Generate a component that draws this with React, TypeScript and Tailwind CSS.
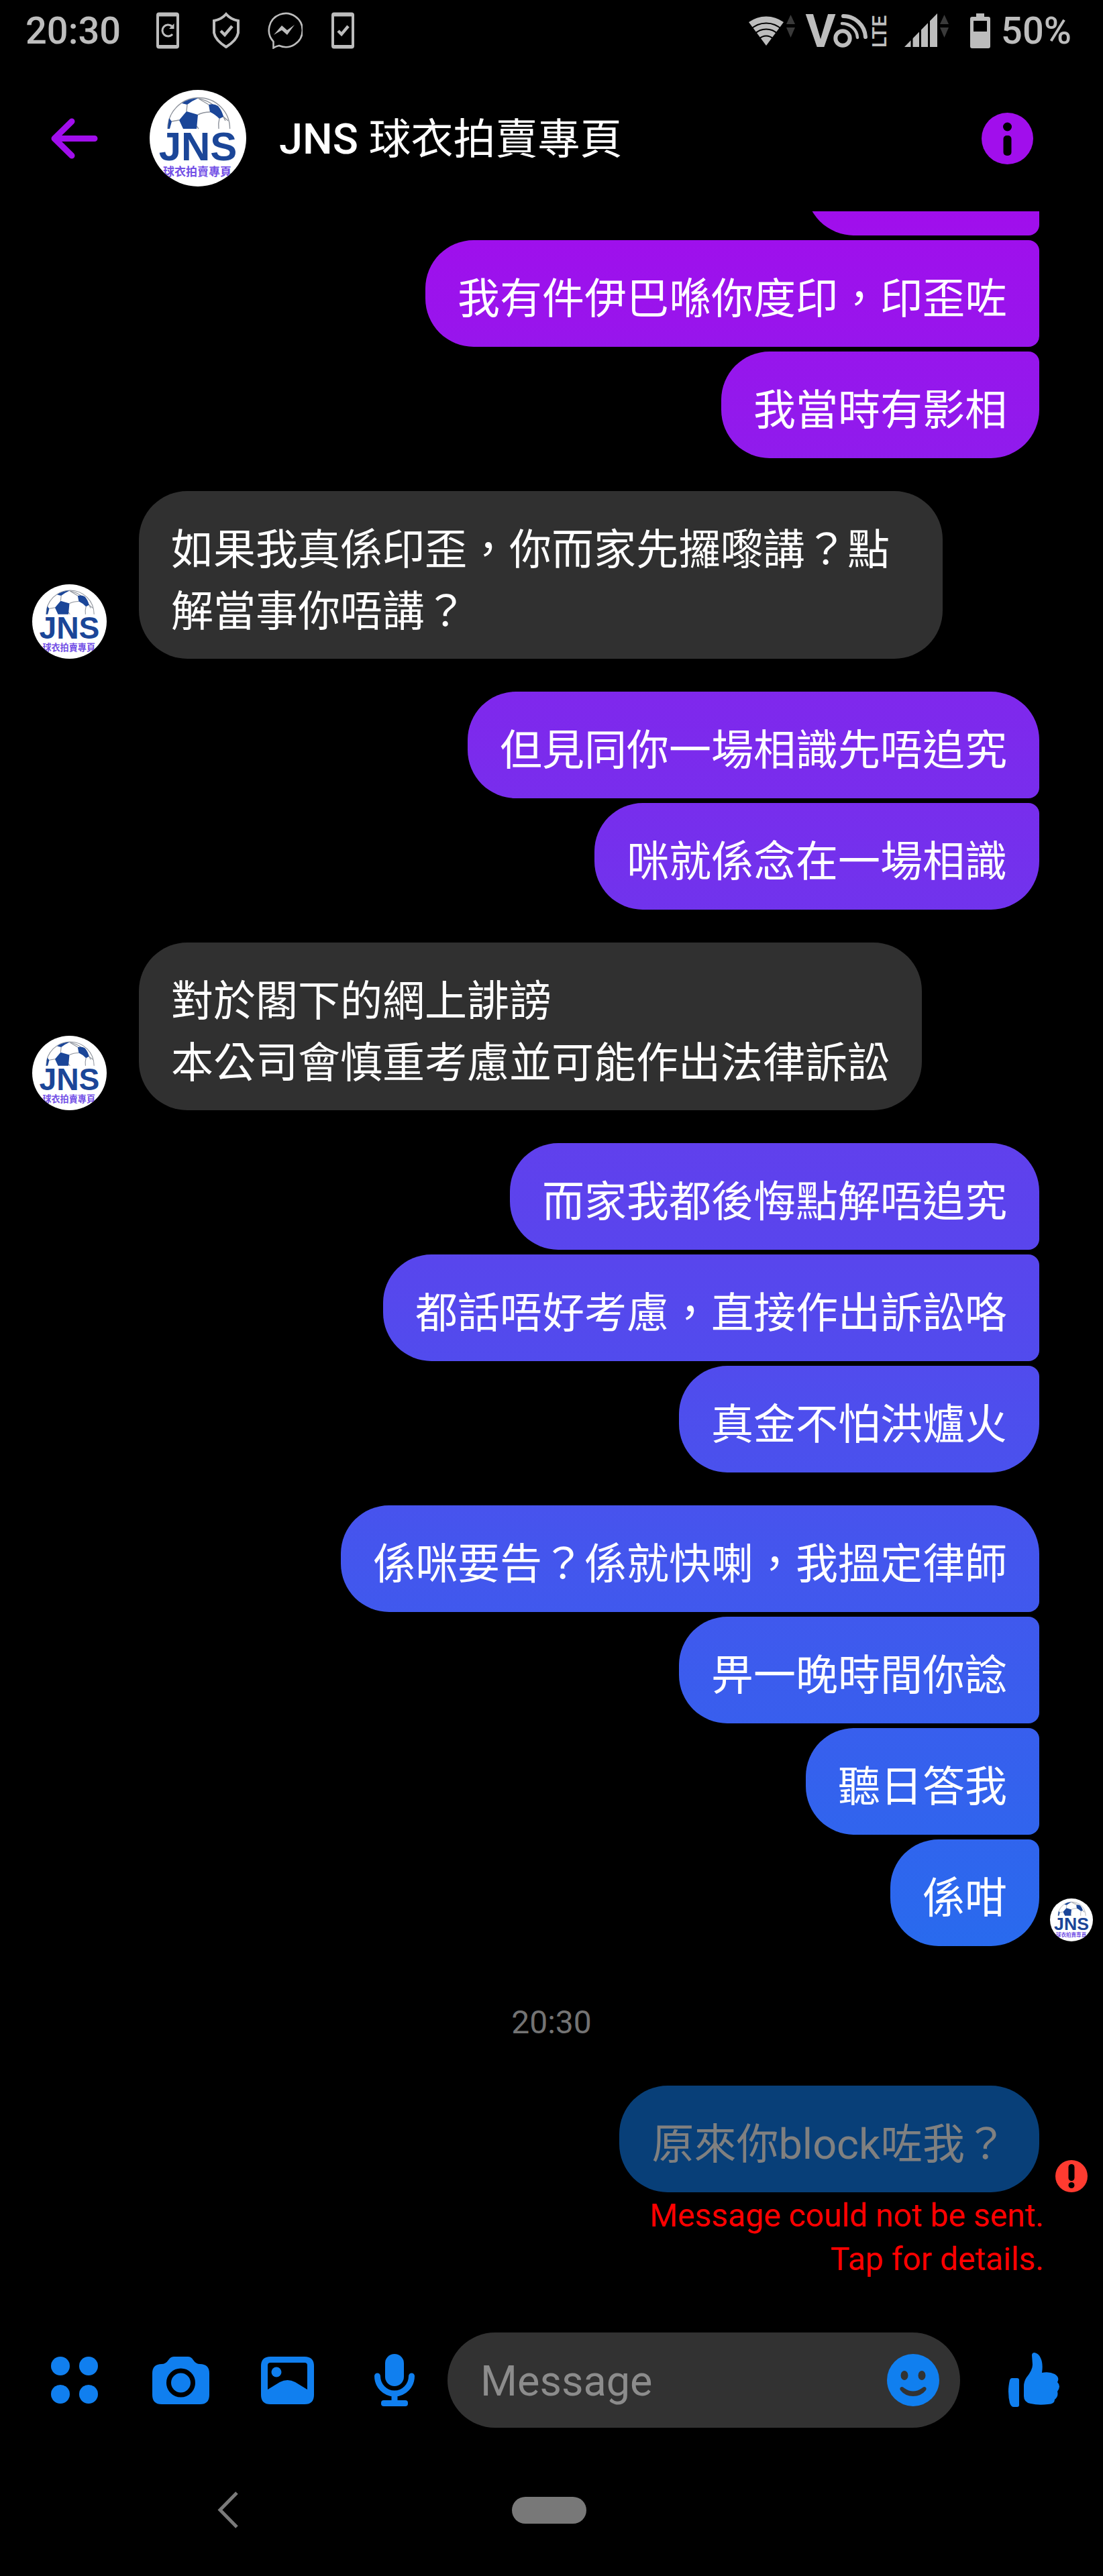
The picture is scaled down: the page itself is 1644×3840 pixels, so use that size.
import { clsx } from "clsx";

type Message = { text: string };
type Group = { from: "me" | "them"; messages: Message[]; seen?: boolean };

const groups: Group[] = [
  {
    from: "me",
    messages: [
      { text: "" },
      { text: "我有件伊巴喺你度印，印歪咗" },
      { text: "我當時有影相" },
    ],
  },
  {
    from: "them",
    messages: [{ text: "如果我真係印歪，你而家先攞嚟講？點解當事你唔講？" }],
  },
  {
    from: "me",
    messages: [{ text: "但見同你一場相識先唔追究" }, { text: "咪就係念在一場相識" }],
  },
  {
    from: "them",
    messages: [{ text: "對於閣下的網上誹謗\n本公司會慎重考慮並可能作出法律訴訟" }],
  },
  {
    from: "me",
    messages: [
      { text: "而家我都後悔點解唔追究" },
      { text: "都話唔好考慮，直接作出訴訟咯" },
      { text: "真金不怕洪爐火" },
    ],
  },
  {
    from: "me",
    seen: true,
    messages: [
      { text: "係咪要告？係就快喇，我搵定律師" },
      { text: "畀一晚時間你諗" },
      { text: "聽日答我" },
      { text: "係咁" },
    ],
  },
];

function Avatar({ className }: { className: string }) {
  return (
    <svg viewBox="0 0 144 144" className={clsx("shrink-0 rounded-full bg-white", className)} role="img" aria-label="JNS 球衣拍賣專頁">
      <g fill="none" stroke="#8e939c" strokeWidth="1.4">
        <path d="M27 58 A46.3 46.3 0 0 1 119.6 58" />
        <path d="M73 13 Q100 18 113 46" />
        <path d="M56 22 L55 32 M72 37 Q80 33 90 33 M44 45 L33 47 M104 43 Q102 50 103 58 M73 13 L88 22 M110 40 L117 46 M70 54 L73 58" />
      </g>
      <g fill="#1b4698">
        <path d="M55 32 L72 37 L70 58 H50 L44 45 Z" />
        <path d="M88 22 Q96 20 102 24 Q108 31 110 40 L104 43 Q97 36 90 33 Z" />
        <path d="M48 20 Q57 13 73 12 Q64 16 56 22 Z" />
        <path d="M29 42 L33 47 L30 58 H27 Z" />
        <text x="72" y="105" textAnchor="middle" fontSize="60" fontWeight="700" fontFamily="'Liberation Sans', sans-serif">
          JNS
        </text>
      </g>
      <text x="71" y="128" textAnchor="middle" fontSize="17" fontWeight="700" fill="#7350e6" fontFamily="'Noto Sans CJK TC', sans-serif">
        球衣拍賣專頁
      </text>
    </svg>
  );
}

function DataArrows({ x }: { x: number }) {
  return (
    <g fill="#3a3a3a">
      <path d={`M${x} 16 L${x + 6.5} 2 L${x + 13} 16 Z`} />
      <path d={`M${x} 21 L${x + 6.5} 36 L${x + 13} 21 Z`} />
    </g>
  );
}

function StatusBar() {
  return (
    <div className="flex h-[95px] shrink-0 items-center justify-between pr-[47px] pb-1 pl-[38px] text-[56px] leading-none font-medium text-[#bdbdbd]">
      <div className="flex items-center">
        <span className="w-[168px]">20:30</span>
        <span className="flex w-[87px] justify-center">
          <svg width="34" height="55" fill="none" stroke="currentColor">
            <rect x="2" y="2.5" width="30" height="50" rx="2" strokeWidth="4" />
            <path d="M4 5 H30 M4 50.5 H30" strokeWidth="3" />
            <path d="M24 33 A8.5 8.5 0 1 1 23 21" strokeWidth="3" />
            <path d="M19 25 H26.5 V17 Z" fill="currentColor" stroke="none" />
          </svg>
        </span>
        <span className="flex w-[87px] justify-center">
          <svg width="42" height="55" fill="none" stroke="currentColor" strokeWidth="4">
            <path d="M21 3 Q28 11 39 13 V31 Q37 42 21 52 Q5 42 3 31 V13 Q14 11 21 3 Z" />
            <path d="M13 28 L19 34 L30 21" strokeWidth="4.5" />
          </svg>
        </span>
        <span className="flex w-[87px] justify-center">
          <svg width="54" height="55" fill="none" stroke="currentColor" strokeWidth="2.6">
            <path d="M10.5 44 A25 25 0 1 1 19 50 Q14 51 10.5 53.5 Z" />
            <path d="M11 34 L23 20 L31 27 L42 19 L31 34 L23 27 Z" fill="currentColor" stroke="none" />
          </svg>
        </span>
        <span className="flex w-[87px] justify-center">
          <svg width="34" height="55" fill="none" stroke="currentColor">
            <rect x="2" y="2.5" width="30" height="50" rx="2" strokeWidth="4" />
            <path d="M4 5 H30 M4 50.5 H30" strokeWidth="3" />
            <path d="M10 28 L15 33 L25 21" strokeWidth="4.5" />
          </svg>
        </span>
      </div>

      <div className="flex items-center">
        <svg width="69" height="52" className="mr-[14px]" role="img" aria-label="Wi-Fi">
          <path d="M26 48 L0 13 A44 44 0 0 1 52 13 Z" fill="currentColor" />
          <g fill="none" stroke="#000" strokeWidth="2">
            <circle cx="26" cy="48" r="33.5" />
            <circle cx="26" cy="48" r="24.5" />
            <circle cx="26" cy="48" r="14.5" />
          </g>
          <DataArrows x={56} />
        </svg>
        <svg width="124" height="52" className="mr-[25px] overflow-visible" role="img" aria-label="VoLTE">
          <text x="24" y="50" textAnchor="middle" fontSize="69" fontWeight="700" fill="currentColor">V</text>
          <g fill="none" stroke="currentColor" strokeLinecap="round">
            <circle cx="57" cy="37" r="10.7" strokeWidth="6" />
            <path d="M58 4 A33 33 0 0 1 91 35" strokeWidth="6" />
            <path d="M56 15 A23 22 0 0 1 79 36" strokeWidth="4.5" />
          </g>
          <text transform="translate(122 51) rotate(-90)" fontSize="30" fontWeight="600" fill="currentColor">LTE</text>
        </svg>
        <svg width="66" height="52" className="mr-8" role="img" aria-label="Signal">
          <path d="M0 50 L49 0 V50 Z" fill="currentColor" />
          <path d="M11 0 V52 M23.5 0 V52 M36.5 0 V52" stroke="#000" strokeWidth="3" />
          <DataArrows x={53} />
        </svg>
        <svg width="30" height="52" className="mr-4" role="img" aria-label="Battery">
          <path fill="currentColor" fillRule="evenodd" d="M9 0 H21 V5 H27 Q30 5 30 8 V49 Q30 52 27 52 H3 Q0 52 0 49 V8 Q0 5 3 5 H9 Z M5 11 V27 H25 V11 Z" />
        </svg>
        <span>50%</span>
      </div>
    </div>
  );
}

function Header() {
  return (
    <header className="flex h-[220px] shrink-0 items-center pt-0.5 pr-[104px] pl-[76px] text-[#a10eec]">
      <button type="button" aria-label="Back" className="mr-[77px]">
        <svg width="70" height="61" fill="none" stroke="currentColor" strokeWidth="9" strokeLinecap="round" strokeLinejoin="round">
          <path d="M31 5 L5 30.5 L31 56 M6 30.5 H65" />
        </svg>
      </button>
      <Avatar className="mr-[49px] size-36" />
      <h1 className="flex-1 pt-1 text-[63px] leading-[92px] text-white">
        <span className="font-medium">JNS</span> 球衣拍賣專頁
      </h1>
      <button type="button" aria-label="Conversation details">
        <svg width="77" height="77">
          <circle cx="38.5" cy="38.5" r="38.5" fill="currentColor" />
          <circle cx="38.5" cy="21" r="6.5" />
          <rect x="32.5" y="34" width="12" height="30" rx="5" />
        </svg>
      </button>
    </header>
  );
}

function MyGroup({ group }: { group: Group }) {
  const last = group.messages.length - 1;
  return (
    <div className="flex flex-col gap-[7px]">
      {group.messages.map((message, index) => (
        <div key={index} className="flex items-end justify-end">
          <p
            className={clsx(
              "h-[159px] rounded-l-[72px] bg-[linear-gradient(to_bottom,#a10eec_8%,#0f7eee_90%)] bg-fixed px-12 pt-[42px]",
              index === 0 ? "rounded-tr-[72px]" : "rounded-tr-[16px]",
              index === last ? "rounded-br-[72px]" : "rounded-br-[16px]",
              !message.text && "w-[348px]",
            )}
          >
            {message.text}
          </p>
          <div className="flex w-[95px] shrink-0 justify-center">
            {group.seen && index === last && <Avatar className="mb-[7px] size-16" />}
          </div>
        </div>
      ))}
    </div>
  );
}

function TheirGroup({ group }: { group: Group }) {
  return (
    <div className="flex items-end gap-12 pl-12">
      <Avatar className="size-[111px]" />
      {group.messages.map((message) => (
        <p key={message.text} className="max-w-[1198px] rounded-[72px] bg-[#303030] px-12 pt-[42px] pb-6 whitespace-pre-line">
          {message.text}
        </p>
      ))}
    </div>
  );
}

function Composer() {
  return (
    <form className="flex shrink-0 items-center pt-[77px] pl-[31px] text-[#107fef]">
      <button type="button" aria-label="More actions" className="flex w-[159px] shrink-0 justify-center">
        <svg width="70" height="70" fill="currentColor">
          <circle cx="14" cy="14" r="14" />
          <circle cx="56" cy="14" r="14" />
          <circle cx="14" cy="56" r="14" />
          <circle cx="56" cy="56" r="14" />
        </svg>
      </button>
      <button type="button" aria-label="Camera" className="flex w-[159px] shrink-0 justify-center">
        <svg width="85" height="71" fill="currentColor">
          <path d="M14 11 Q20 11 24 5 Q27 0 32 0 H53 Q58 0 61 5 Q65 11 71 11 Q85 11 85 25 V57 Q85 71 71 71 H14 Q0 71 0 57 V25 Q0 11 14 11 Z" />
          <circle cx="42.5" cy="39" r="18" fill="none" stroke="#000" strokeWidth="7" />
        </svg>
      </button>
      <button type="button" aria-label="Gallery" className="flex w-[159px] shrink-0 justify-center">
        <svg width="79" height="71" fill="currentColor">
          <path fillRule="evenodd" d="M14 0 H65 Q79 0 79 14 V57 Q79 71 65 71 H14 Q0 71 0 57 V14 Q0 0 14 0 Z M14 9 Q10 9 10 13 V49 L28 38 Q39.5 32 51 38 L69 49 V13 Q69 9 65 9 Z" />
          <circle cx="23" cy="23" r="7.5" />
        </svg>
      </button>
      <button type="button" aria-label="Voice message" className="flex w-[159px] shrink-0 justify-center">
        <svg width="60" height="78" fill="currentColor">
          <rect x="16" y="0" width="28" height="48" rx="14" />
          <path d="M4.5 33 A25.5 26 0 0 0 55.5 33" fill="none" stroke="currentColor" strokeWidth="9" strokeLinecap="round" />
          <rect x="25.5" y="60" width="9" height="12" />
          <rect x="10" y="69" width="40" height="9" rx="4" />
        </svg>
      </button>
      <div className="flex h-[142px] min-w-0 flex-1 items-center rounded-full bg-[#323232] pr-[31px] pl-[49px]">
        <input
          type="text"
          aria-label="Message"
          placeholder="Message"
          className="min-w-0 flex-1 bg-transparent pt-1 text-[63px] leading-[92px] text-white outline-none placeholder:text-[#8c8c8c]"
        />
        <button type="button" aria-label="Emoji">
          <svg width="78" height="78">
            <circle cx="39" cy="39" r="39" fill="currentColor" />
            <g fill="#323232">
              <ellipse cx="26" cy="32" rx="5.5" ry="7" />
              <ellipse cx="52" cy="32" rx="5.5" ry="7" />
              <path d="M20 54 Q18 50 22 49 Q24 49 26 51 Q39 60 52 51 Q54 49 56 49 Q60 50 58 54 Q51 63 39 63 Q27 63 20 54 Z" />
            </g>
          </svg>
        </button>
      </div>
      <button type="button" aria-label="Like" className="flex w-[213px] shrink-0 justify-center pl-2">
        <svg width="79" height="82" fill="currentColor">
          <path d="M6 38 H14 Q17 38 17 41 V78 Q17 81 14 81 H9 Q5 81 3 75 Q-1 58 3 41 Q4 38 6 38 Z" />
          <path d="M36 4 Q36 0 40 0 Q46 1 49 8 Q53 16 51 30 Q62 28 70 32 Q78 37 74 44 Q80 50 74 58 Q76 65 70 70 Q70 77 60 77 Q46 79 34 76 Q24 74 24 65 V50 Q24 43 28 37 Q37 26 37 18 Z" />
        </svg>
      </button>
    </form>
  );
}

function NavBar() {
  return (
    <nav className="grid h-[221px] shrink-0 grid-cols-[1fr_auto_1fr] items-center pt-6 pr-2">
      <button type="button" aria-label="Back" className="ml-[324px] justify-self-start">
        <svg width="31" height="55" fill="none" stroke="#7a7a7a" strokeWidth="5">
          <path d="M29 2 L4 27.5 L29 53" />
        </svg>
      </button>
      <button type="button" aria-label="Home" className="h-10 w-[111px] rounded-full bg-[#787878]" />
    </nav>
  );
}

export default function App() {
  return (
    <div lang="zh-Hant" className="flex h-screen flex-col bg-black font-[Roboto,'Noto_Sans_CJK_TC',sans-serif]">
      <StatusBar />
      <Header />
      <main className="flex min-h-0 flex-1 flex-col justify-end overflow-hidden text-[63px] leading-[92px] text-white">
        <div className="flex flex-col gap-[49px]">
          {groups.map((group, index) =>
            group.from === "me" ? <MyGroup key={index} group={group} /> : <TheirGroup key={index} group={group} />,
          )}
        </div>
        <time className="flex h-[208px] shrink-0 items-center justify-center pt-5 text-[48px] text-[#737373]">20:30</time>
        <div className="flex items-end justify-end">
          <p className="h-[159px] rounded-[72px] bg-[#083f78] px-12 pt-[42px] text-[#808080]">原來你block咗我？</p>
          <div className="flex w-[95px] shrink-0 justify-center">
            <svg width="48" height="48" role="img" aria-label="Not sent">
              <circle cx="24" cy="24" r="24" fill="#ff3b30" />
              <rect x="19.5" y="6" width="9" height="25" rx="4.5" />
              <circle cx="24" cy="37.5" r="4.5" />
            </svg>
          </div>
        </div>
        <p className="pt-0.5 pr-[88px] text-right text-[48px] leading-[65px] text-[#ff0000]">
          Message could not be sent.
          <br />
          Tap for details.
        </p>
      </main>
      <Composer />
      <NavBar />
    </div>
  );
}
